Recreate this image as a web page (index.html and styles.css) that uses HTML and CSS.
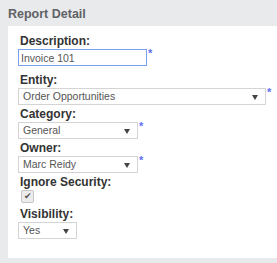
FILE: index.html
```html
<!DOCTYPE html>
<html lang="en">
<head>
    <meta charset="UTF-8">
    <title>Report Detail</title>
    <link rel="stylesheet" href="styles.css">
</head>
<body>

    <div class="panel">
        <div class="panel-title">Report Detail</div>

        <div class="panel-body">
            <div class="field first">
                <label>Description:</label>
                <div class="control">
                    <input type="text" class="text-input focused" value="Invoice 101">
                    <span class="req">*</span>
                </div>
            </div>

            <div class="field">
                <label>Entity:</label>
                <div class="control">
                    <div class="select wide">Order Opportunities<span class="arrow"></span></div>
                    <span class="req">*</span>
                </div>
            </div>

            <div class="field">
                <label>Category:</label>
                <div class="control">
                    <div class="select medium">General<span class="arrow"></span></div>
                    <span class="req">*</span>
                </div>
            </div>

            <div class="field">
                <label>Owner:</label>
                <div class="control">
                    <div class="select medium">Marc Reidy<span class="arrow"></span></div>
                    <span class="req">*</span>
                </div>
            </div>

            <div class="field">
                <label>Ignore Security:</label>
                <div class="control">
                    <span class="check">&#10004;</span>
                </div>
            </div>

            <div class="field">
                <label>Visibility:</label>
                <div class="control">
                    <div class="select small">Yes<span class="arrow"></span></div>
                </div>
            </div>
        </div>
    </div>

</body>
</html>
```

FILE: styles.css
```css
/* General Styles */
body {
    font-family: "Liberation Sans", Arial, sans-serif;
    margin: 0;
    padding: 0;
    background-color: #e9eaec;
    width: 277px;
    height: 263px;
    overflow: hidden;
}

.panel {
    padding-left: 8px;
}

.panel-title {
    height: 26px;
    line-height: 26px;
    font-size: 12.5px;
    font-weight: bold;
    color: #5f6266;
    padding-top: 1px;
    box-sizing: border-box;
}

.panel-body {
    background-color: #fff;
    padding: 8px 0 17px 12px;
}

.field {
    margin-bottom: 2px;
}

.field.first {
    margin-bottom: 7px;
}

.field label {
    display: block;
    font-size: 12px;
    font-weight: bold;
    color: #333;
    line-height: 14px;
    margin-bottom: 1px;
}

.control {
    display: flex;
    align-items: flex-start;
    margin-left: -2px;
}

.text-input {
    width: 129px;
    height: 17px;
    box-sizing: border-box;
    border: 1px solid #ccc;
    padding: 0 2px;
    margin: 0;
    font-family: inherit;
    font-size: 10.5px;
    color: #555;
    outline: none;
}

.text-input.focused {
    border-color: #7b9ff0;
}

.select {
    position: relative;
    height: 17px;
    line-height: 15px;
    box-sizing: border-box;
    border: 1px solid #d4d4d4;
    padding-left: 4px;
    font-size: 10.5px;
    color: #555;
    background-color: #fff;
}

.select.wide {
    width: 248px;
}

.select.medium {
    width: 120px;
}

.select.small {
    width: 59px;
}

.arrow {
    position: absolute;
    right: 7px;
    top: 6px;
    width: 0;
    height: 0;
    border-left: 3px solid transparent;
    border-right: 3px solid transparent;
    border-top: 5px solid #444;
}

.req {
    color: #5b6ef5;
    font-size: 11px;
    line-height: 9px;
    margin-left: 1px;
    font-weight: bold;
}

.check {
    display: inline-block;
    width: 11px;
    height: 11px;
    margin: 0 0 2px 3px;
    border: 1px solid #c6c6c6;
    border-radius: 2px;
    background-color: #ececec;
    color: #555;
    font-size: 9px;
    line-height: 11px;
    text-align: center;
}
```
